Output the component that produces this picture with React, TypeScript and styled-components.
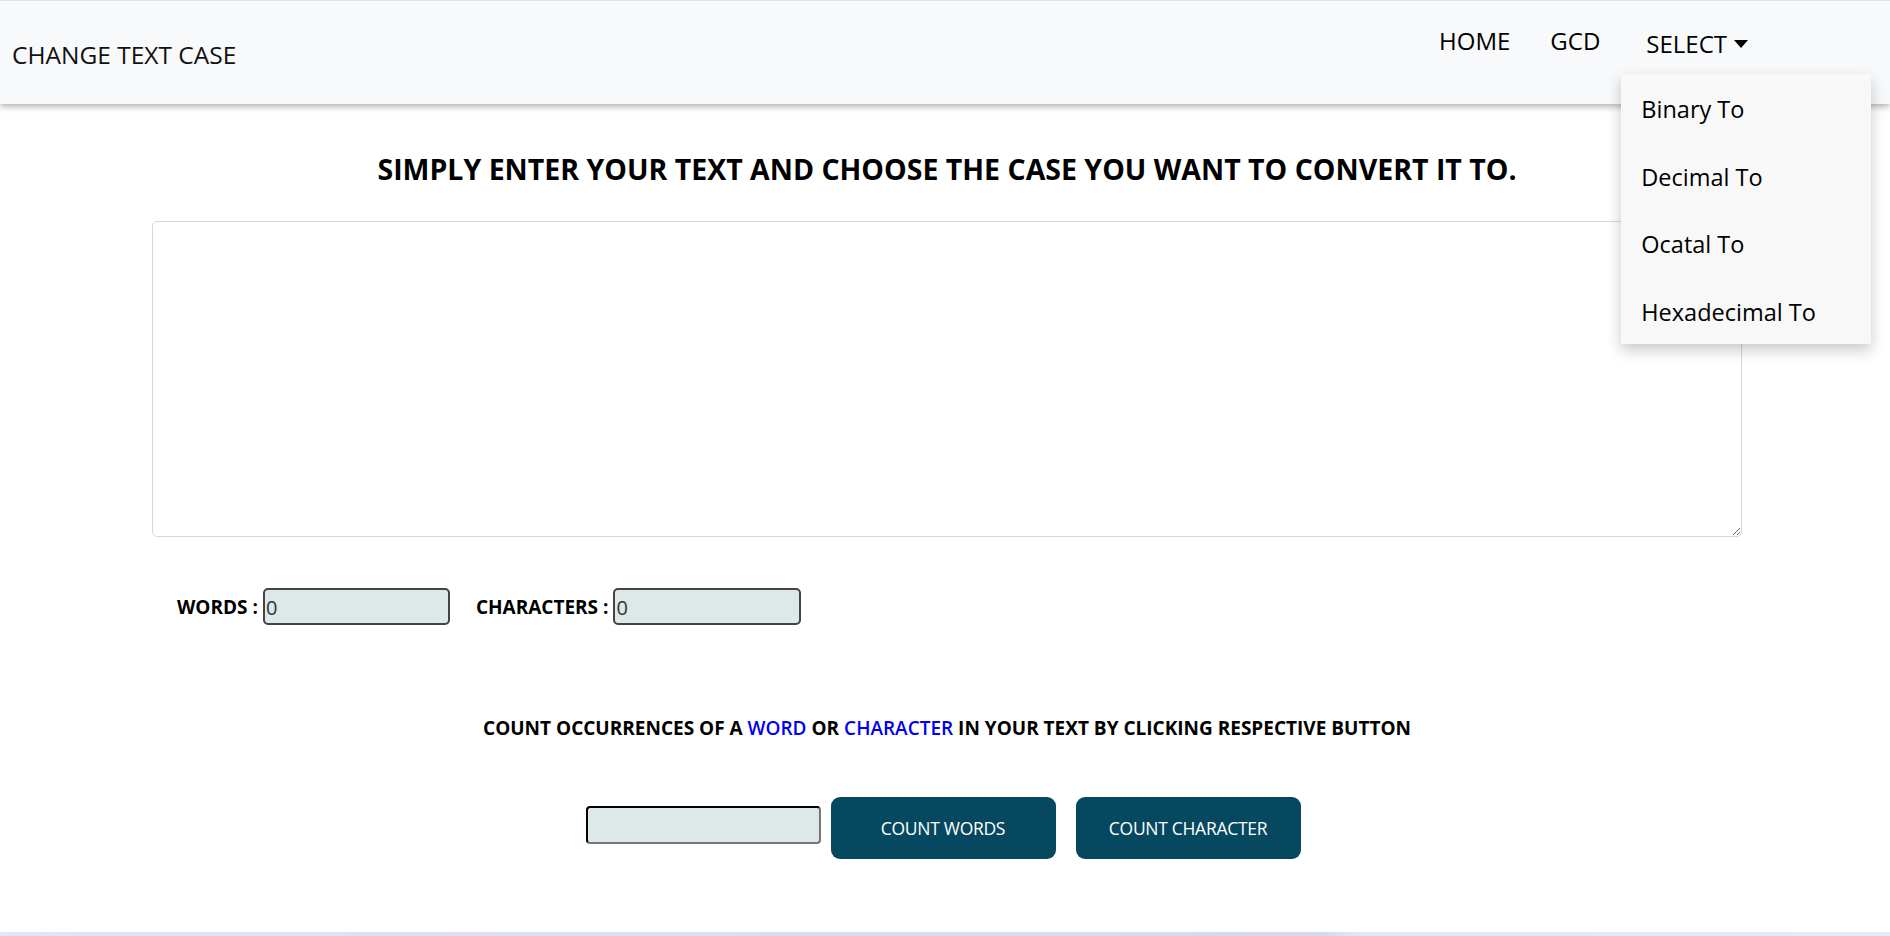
import styled, { createGlobalStyle } from 'styled-components'

const GlobalStyle = createGlobalStyle`
  html, body {
    margin: 0;
    padding: 0;
    background: #ffffff;
    font-family: "Open Sans", "Noto Sans", sans-serif;
    color: #000;
  }
  #root {
    min-height: 936px;
    display: flex;
    flex-direction: column;
  }
`

const Navbar = styled.nav`
  height: 103px;
  border-top: 1px solid #dee2e6;
  background: #f8f9fa;
  box-shadow: 0 3px 6px rgba(0, 0, 0, 0.28);
  display: flex;
  align-items: center;
  justify-content: space-between;
  position: relative;
  z-index: 2;
`

const Brand = styled.div`
  padding-left: 12px;
  font-size: 24.5px;
  font-weight: 400;
  color: #111;
  margin-top: 3px;
`

const NavList = styled.ul`
  list-style: none;
  margin: -24px 142px 0 0;
  padding: 0;
  display: flex;
  align-items: center;
  gap: 40px;
`

const NavItem = styled.li<{ $drop?: boolean }>`
  position: relative;
  font-size: 24px;
  color: #000;
  display: flex;
  align-items: center;
  gap: 7px;
  margin-top: ${({ $drop }) => ($drop ? '5px' : '0')};
  margin-left: ${({ $drop }) => ($drop ? '6px' : '0')};
`

const Caret = styled.span`
  width: 0;
  height: 0;
  border-left: 7px solid transparent;
  border-right: 7px solid transparent;
  border-top: 8px solid #000;
  margin-top: 2px;
`

const Dropdown = styled.div`
  position: absolute;
  top: 47px;
  left: -25px;
  width: 250px;
  height: 270px;
  background: #f8f8f8;
  box-shadow: 0 6px 14px rgba(0, 0, 0, 0.22);
  display: flex;
  flex-direction: column;
  padding-top: 2px;
  box-sizing: border-box;
`

const DropItem = styled.div`
  flex-shrink: 0;
  height: 67.5px;
  padding-left: 20px;
  display: flex;
  align-items: center;
  font-size: 23.5px;
  color: #000;
`

const Main = styled.main`
  width: 1590px;
  margin-left: 152px;
  flex: 1;
`

const Heading = styled.h1`
  margin: 46px 0 0;
  text-align: center;
  font-size: 28.5px;
  font-weight: 700;
  line-height: 38px;
`

const TextBox = styled.textarea`
  display: block;
  width: 100%;
  height: 316px;
  margin-top: 33px;
  box-sizing: border-box;
  border: 1px solid #d3d8de;
  border-radius: 5px;
  resize: vertical;
  font-family: inherit;
  font-size: 20px;
  outline: none;
`

const CountRow = styled.div`
  display: flex;
  align-items: center;
  padding-left: 25px;
  margin-top: 51px;
  gap: 26px;
`

const Field = styled.label`
  display: flex;
  align-items: center;
  gap: 5px;
  font-size: 19px;
  font-weight: 700;
`

const CountInput = styled.input<{ $w: number }>`
  width: ${({ $w }) => $w}px;
  height: 37px;
  box-sizing: border-box;
  background: #dde8e8;
  border: 2px solid #444;
  border-radius: 5px;
  padding: 2px 1px 0;
  font-family: inherit;
  font-size: 20px;
  color: #333;
  outline: none;
`

const Info = styled.p`
  margin: 90px 0 0;
  text-align: center;
  font-size: 19px;
  line-height: 26px;
  font-weight: 700;
`

const Blue = styled.span`
  color: #0000ee;
  font-weight: 600;
`

const SearchRow = styled.div`
  margin-top: 56px;
  display: flex;
  align-items: center;
  justify-content: center;
  gap: 10px;
  padding-right: 8px;
`

const SearchInput = styled.input`
  width: 235px;
  height: 38px;
  margin-bottom: 6px;
  box-sizing: border-box;
  background: #dde8e8;
  border: 2px inset #767676;
  border-top-color: #222;
  border-left-color: #222;
  border-radius: 4px;
  outline: none;
`

const ActionButton = styled.button`
  width: 225px;
  height: 62px;
  border: none;
  border-radius: 9px;
  background: #06485f;
  color: #fff;
  font-family: inherit;
  font-size: 17.5px;
  letter-spacing: -0.3px;
  cursor: pointer;
  & + & {
    margin-left: 10px;
  }
`

const BottomStrip = styled.div`
  height: 4px;
  background: linear-gradient(90deg, #dfe6f5 0%, #d8d8ea 70%, #dfe9f6 72%, #e2ecf8 100%);
`

export default function App() {
  const menu = ['Binary To', 'Decimal To', 'Ocatal To', 'Hexadecimal To']

  return (
    <>
      <GlobalStyle />
      <Navbar>
        <Brand>CHANGE TEXT CASE</Brand>
        <NavList>
          <NavItem>HOME</NavItem>
          <NavItem>GCD</NavItem>
          <NavItem $drop>
            SELECT <Caret />
            <Dropdown>
              {menu.map((m) => (
                <DropItem key={m}>{m}</DropItem>
              ))}
            </Dropdown>
          </NavItem>
        </NavList>
      </Navbar>
      <Main>
        <Heading>SIMPLY ENTER YOUR TEXT AND CHOOSE THE CASE YOU WANT TO CONVERT IT TO.</Heading>
        <TextBox />
        <CountRow>
          <Field>
            WORDS : <CountInput $w={187} defaultValue="0" readOnly />
          </Field>
          <Field>
            CHARACTERS : <CountInput $w={188} defaultValue="0" readOnly />
          </Field>
        </CountRow>
        <Info>
          COUNT OCCURRENCES OF A <Blue>WORD</Blue> OR <Blue>CHARACTER</Blue> IN YOUR TEXT BY CLICKING RESPECTIVE BUTTON
        </Info>
        <SearchRow>
          <SearchInput />
          <ActionButton>COUNT WORDS</ActionButton>
          <ActionButton>COUNT CHARACTER</ActionButton>
        </SearchRow>
      </Main>
      <BottomStrip />
    </>
  )
}
